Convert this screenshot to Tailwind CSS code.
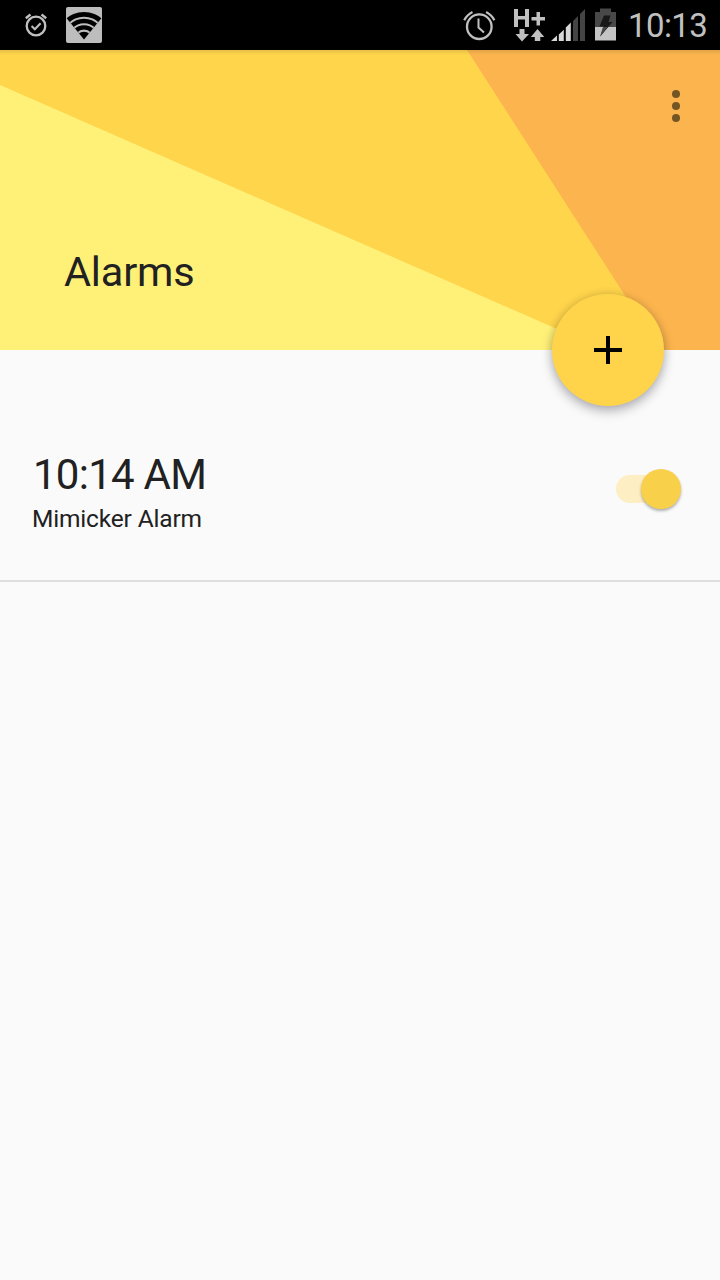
<!DOCTYPE html>
<html lang="en">
<head>
<meta charset="utf-8">
<title>Alarms</title>
<script src="https://cdn.jsdelivr.net/npm/@tailwindcss/browser@4"></script>
</head>
<body class="bg-[#fafafa] font-['Roboto',sans-serif] text-[#212121]">
<div class="flex h-[1280px] w-[720px] flex-col overflow-hidden">
  <!-- Status bar -->
  <div class="flex h-[50px] shrink-0 items-center justify-between bg-black pr-[12px] pl-[24px]">
    <div class="flex h-[50px]">
      <svg class="h-[50px] w-[24px]" viewBox="24 0 24 50" fill="none" stroke="#c0c0c0">
        <circle cx="36" cy="26" r="9.3" stroke-width="2.3"/>
        <path d="M25.8 18.2l4.7-3.7M46.2 18.2l-4.7-3.7" stroke-width="2.4"/>
        <path d="M31.6 26l3.2 3.2 5.8-6" stroke-width="2"/>
      </svg>
      <svg class="ml-[18px] h-[50px] w-[36px]" viewBox="66 0 36 50">
        <rect x="66" y="7" width="36" height="36" rx="2" fill="#bdbdbd"/>
        <clipPath id="wedge"><path d="M84 39.5L66 17.500V8H102V17.500Z"/></clipPath>
        <g clip-path="url(#wedge)">
          <circle cx="84" cy="39.5" r="27.5" fill="#000"/>
          <g fill="none" stroke="#bdbdbd" stroke-width="2.1">
            <circle cx="84" cy="39.5" r="21.7"/>
            <circle cx="84" cy="39.5" r="15.2"/>
            <circle cx="84" cy="39.5" r="8.9"/>
          </g>
        </g>
      </svg>
    </div>
    <div class="flex h-[50px] items-center">
      <svg class="h-[50px] w-[154px]" viewBox="463 0 154 50">
        <g fill="none" stroke="#c0c0c0">
          <circle cx="479.3" cy="26.7" r="12.3" stroke-width="2.3"/>
          <path d="M464.2 20.2Q467 14.8 472.5 12M494.4 20.2Q491.600 14.8 486.100 12" stroke-width="2.2"/>
          <path d="M478.500 18.500V27.500L484 32.500" stroke-width="2"/>
        </g>
        <g fill="#c0c0c0">
          <path d="M514 9h4v7h7V9h4v18h-4v-7.500h-7V27h-4zM536.500 12h3.500v5h5v3.500h-5v5h-3.500v-5h-5v-3.500h5z"/>
          <path d="M519.500 29h5v5h4.500l-7 7.500-6.500-7.500h4zM537.500 29l6.800 8h-4v4h-5.500v-4h-4z"/>
          <path d="M551 41l6-5.500V41zM558.800 34.500l5-4.800V41h-5zM565.800 27.500l5-5V41h-5z" fill="#d8d8d8"/>
          <path d="M573 21l5-5v25h-5zM580 14l5-5v32h-5z" fill="#444"/>
        </g>
        <path d="M595 12h5V8.500h11V12h5v15.500h-21z" fill="#484848"/>
        <path d="M595 27h21v13.500h-21z" fill="#c4c4c4"/>
        <path d="M604 15.500h6.500l-2 6.500h4l-12.300 14.500 3.300-10h-4z" fill="#181818"/>
        <path d="M603 27h4.500l-7.300 9.500z" fill="#484848"/>
      </svg>
      <span class="ml-[11px] w-[80px] pt-[2px] text-[33px] leading-[50px] tracking-[-0.6px] whitespace-nowrap text-[#c0c0c0]">10:13</span>
    </div>
  </div>
  <!-- Header -->
  <header class="relative h-[300px] shrink-0 bg-[#ffd54c]">
    <svg class="absolute inset-0 h-[300px] w-[720px]" viewBox="0 0 720 300">
      <defs><linearGradient id="top" x2="0" y2="1"><stop stop-color="#000" stop-opacity=".1"/><stop offset="1" stop-color="#000" stop-opacity="0"/></linearGradient></defs>
      <path d="M0 35L605 300H0Z" fill="#fff178"/>
      <path d="M467 0H720V300H660Z" fill="#fcb54e"/>
      <path d="M0 0H720V5H0Z" fill="url(#top)"/>
    </svg>
    <div class="relative flex h-full justify-between">
      <h1 class="mt-[192px] ml-[64px] h-[60px] text-[41.500px] leading-[60px] tracking-[-0.2px]">Alarms</h1>
      <button class="mt-[40px] mr-[40px] flex h-[32px] w-[8px] flex-col justify-between" aria-label="More options">
        <span class="size-[8px] rounded-full bg-[#745624]"></span>
        <span class="size-[8px] rounded-full bg-[#745624]"></span>
        <span class="size-[8px] rounded-full bg-[#745624]"></span>
      </button>
    </div>
    <button class="absolute right-[56px] bottom-[-56px] flex size-[112px] items-center justify-center rounded-full bg-[#ffd44b] shadow-[0_5px_12px_rgba(0,0,20,0.28),0_0_8px_rgba(0,0,0,0.1)]" aria-label="Add alarm">
      <svg class="size-[30px]" viewBox="0 0 30 30" stroke="#000" stroke-width="4"><path d="M1 15H29M15 1V29"/></svg>
    </button>
  </header>
  <!-- Alarm row -->
  <main class="flex h-[232px] shrink-0 justify-between border-b-2 border-[#dedede] pr-[39px] pl-[32px]">
    <div class="pt-[100px]">
      <div class="pl-px text-[42px] leading-[50px] tracking-[-0.75px]">10:14 AM</div>
      <div class="mt-[4px] text-[24.500px] leading-[30px] tracking-[-0.17px]">Mimicker Alarm</div>
    </div>
    <div class="mt-[119px] flex h-[40px] w-[65px] items-center">
      <span class="h-[28px] w-[45px] rounded-full bg-[#fdeec4]"></span>
      <span class="-ml-[20px] size-[40px] shrink-0 rounded-full bg-[#f9d04a] shadow-[0_2px_3px_rgba(0,0,0,0.3)]"></span>
    </div>
  </main>
</div>
</body>
</html>
